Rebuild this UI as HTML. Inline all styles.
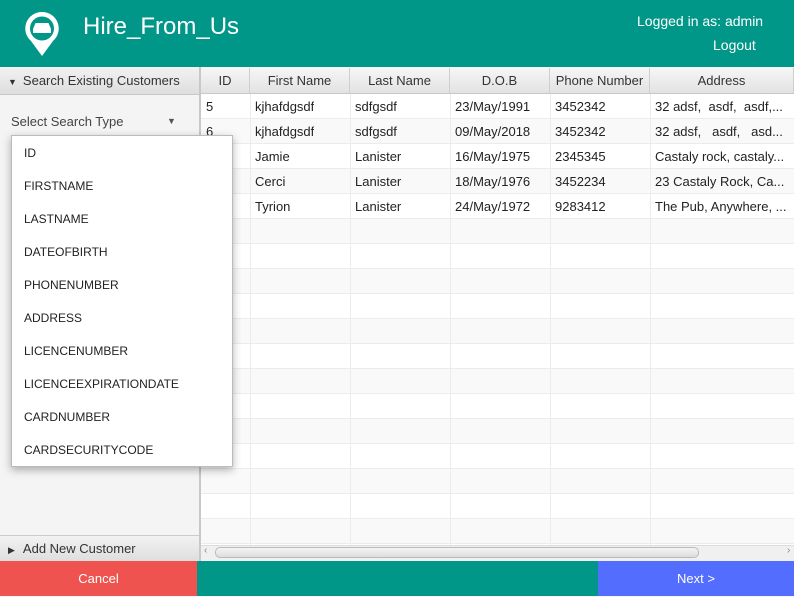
<html><head><style>
body{margin:0;width:794px;height:596px;position:relative;overflow:hidden;font-family:"Liberation Sans",sans-serif;background:#f4f4f4;}
.a{position:absolute;}
.hdr{left:0;top:0;width:794px;height:67px;background:#009688;}
.th{top:68px;height:26px;background:linear-gradient(#f6f6f6,#e2e2e2);border-right:1px solid #cfcfcf;border-bottom:1px solid #c8c8c8;box-sizing:border-box;font-size:13px;color:#333;text-align:center;line-height:26px;}
.row{left:201px;width:593px;height:25px;border-bottom:1px solid #ececec;box-sizing:border-box;}
.c{height:25px;line-height:25px;font-size:13px;color:#222;padding-left:5px;box-sizing:border-box;white-space:nowrap;overflow:hidden;}
.vl{top:94px;width:1px;height:451px;background:#ececec;}
.dd{left:11px;top:135px;width:222px;height:332px;background:#fff;border:1px solid #bbb;box-sizing:border-box;box-shadow:0 3px 8px rgba(0,0,0,.3);}
.dd div{position:absolute;left:12px;font-size:12px;color:#222;}
</style></head><body>
<div class="a hdr"></div>
<svg class="a" style="left:24px;top:11px" width="36" height="46" viewBox="0 0 36 46"><path d="M18 1A16.5 16.5 0 0 0 7 30L18 45L29 30A16.5 16.5 0 0 0 18 1Z" fill="#fff"/><circle cx="18" cy="17.5" r="12" fill="#009688"/><path d="M9 22v-4l2.5-6h13l2.5 6v4z" fill="#fff"/></svg>
<div class="a" style="left:83px;top:13px;font-size:24px;color:#fff">Hire_From_Us</div>
<div class="a" style="left:637px;top:13px;font-size:14px;color:#fff">Logged in as: admin</div>
<div class="a" style="left:713px;top:37px;font-size:14px;color:#fff">Logout</div>
<div class="a" style="left:0;top:67px;width:199px;height:28px;background:linear-gradient(#f2f2f2,#dedede);border-bottom:1px solid #c8c8c8;box-sizing:border-box;font-size:13px;color:#333;line-height:27px"><span style="font-size:9px;margin:0 6px 0 8px">▼</span>Search Existing Customers</div>
<div class="a" style="left:11px;top:114px;font-size:13px;color:#444">Select Search Type</div>
<div class="a" style="left:167px;top:116px;font-size:9px;color:#555">▼</div>
<div class="a" style="left:199px;top:67px;width:2px;height:494px;background:#c8c8c8"></div>
<div class="a" style="left:201px;top:94px;width:593px;height:451px;background:#fff"></div>
<div class="a th" style="left:201px;width:49px">ID</div>
<div class="a th" style="left:250px;width:100px">First Name</div>
<div class="a th" style="left:350px;width:100px">Last Name</div>
<div class="a th" style="left:450px;width:100px">D.O.B</div>
<div class="a th" style="left:550px;width:100px">Phone Number</div>
<div class="a th" style="left:650px;width:144px">Address</div>
<div class="a row" style="top:94px;background:#fff"></div>
<div class="a row" style="top:119px;background:#f9f9f9"></div>
<div class="a row" style="top:144px;background:#fff"></div>
<div class="a row" style="top:169px;background:#f9f9f9"></div>
<div class="a row" style="top:194px;background:#fff"></div>
<div class="a row" style="top:219px;background:#f9f9f9"></div>
<div class="a row" style="top:244px;background:#fff"></div>
<div class="a row" style="top:269px;background:#f9f9f9"></div>
<div class="a row" style="top:294px;background:#fff"></div>
<div class="a row" style="top:319px;background:#f9f9f9"></div>
<div class="a row" style="top:344px;background:#fff"></div>
<div class="a row" style="top:369px;background:#f9f9f9"></div>
<div class="a row" style="top:394px;background:#fff"></div>
<div class="a row" style="top:419px;background:#f9f9f9"></div>
<div class="a row" style="top:444px;background:#fff"></div>
<div class="a row" style="top:469px;background:#f9f9f9"></div>
<div class="a row" style="top:494px;background:#fff"></div>
<div class="a row" style="top:519px;background:#f9f9f9"></div>
<div class="a vl" style="left:250px"></div><div class="a vl" style="left:350px"></div><div class="a vl" style="left:450px"></div><div class="a vl" style="left:550px"></div><div class="a vl" style="left:650px"></div>
<div class="a" style="left:201px;top:94px">
<div class="a c" style="left:0;top:0">5</div><div class="a c" style="left:49px;top:0">kjhafdgsdf</div><div class="a c" style="left:149px;top:0">sdfgsdf</div><div class="a c" style="left:249px;top:0">23/May/1991</div><div class="a c" style="left:349px;top:0">3452342</div><div class="a c" style="left:449px;top:0;width:144px">32 adsf,&nbsp; asdf,&nbsp; asdf,...</div>
<div class="a c" style="left:0;top:25px">6</div><div class="a c" style="left:49px;top:25px">kjhafdgsdf</div><div class="a c" style="left:149px;top:25px">sdfgsdf</div><div class="a c" style="left:249px;top:25px">09/May/2018</div><div class="a c" style="left:349px;top:25px">3452342</div><div class="a c" style="left:449px;top:25px;width:144px">32 adsf,&nbsp;&nbsp; asdf,&nbsp;&nbsp; asd...</div>
<div class="a c" style="left:49px;top:50px">Jamie</div><div class="a c" style="left:149px;top:50px">Lanister</div><div class="a c" style="left:249px;top:50px">16/May/1975</div><div class="a c" style="left:349px;top:50px">2345345</div><div class="a c" style="left:449px;top:50px;width:144px">Castaly rock, castaly...</div>
<div class="a c" style="left:49px;top:75px">Cerci</div><div class="a c" style="left:149px;top:75px">Lanister</div><div class="a c" style="left:249px;top:75px">18/May/1976</div><div class="a c" style="left:349px;top:75px">3452234</div><div class="a c" style="left:449px;top:75px;width:144px">23 Castaly Rock, Ca...</div>
<div class="a c" style="left:49px;top:100px">Tyrion</div><div class="a c" style="left:149px;top:100px">Lanister</div><div class="a c" style="left:249px;top:100px">24/May/1972</div><div class="a c" style="left:349px;top:100px">9283412</div><div class="a c" style="left:449px;top:100px;width:144px">The Pub, Anywhere, ...</div>
</div>
<div class="a" style="left:201px;top:545px;width:593px;height:16px;background:#f0f0f0;border-top:1px solid #ddd;box-sizing:border-box"></div>
<div class="a" style="left:204px;top:545px;font-size:10px;color:#888">‹</div>
<div class="a" style="left:787px;top:545px;font-size:10px;color:#888">›</div>
<div class="a" style="left:215px;top:547px;width:484px;height:11px;border:1px solid #bbb;border-radius:5px;background:linear-gradient(#f4f4f4,#ddd);box-sizing:border-box"></div>
<div class="a" style="left:0;top:535px;width:199px;height:26px;background:linear-gradient(#f2f2f2,#dedede);border-top:1px solid #ccc;box-sizing:border-box;font-size:13px;color:#333;line-height:25px"><span style="font-size:9px;margin:0 8px 0 8px">▶</span>Add New Customer</div>
<div class="a" style="left:0;top:561px;width:794px;height:35px;background:#009688"></div>
<div class="a" style="left:0;top:561px;width:197px;height:35px;background:#ef5350;color:#fff;font-size:13px;text-align:center;line-height:36px">Cancel</div>
<div class="a" style="left:598px;top:561px;width:196px;height:35px;background:#536dfe;color:#fff;font-size:13px;text-align:center;line-height:36px">Next &gt;</div>
<div class="a dd">
<div style="top:10px">ID</div><div style="top:43px">FIRSTNAME</div><div style="top:76px">LASTNAME</div><div style="top:109px">DATEOFBIRTH</div><div style="top:142px">PHONENUMBER</div><div style="top:175px">ADDRESS</div><div style="top:208px">LICENCENUMBER</div><div style="top:241px">LICENCEEXPIRATIONDATE</div><div style="top:274px">CARDNUMBER</div><div style="top:307px">CARDSECURITYCODE</div>
</div>
</body></html>
